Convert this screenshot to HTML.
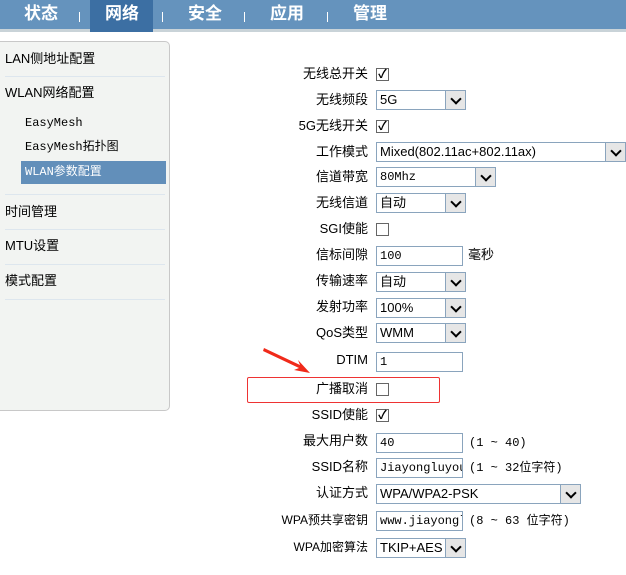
<!DOCTYPE html>
<html><head><meta charset="utf-8"><style>
*{margin:0;padding:0;box-sizing:border-box}
body{width:626px;height:575px;background:#fff;position:relative;overflow:hidden;font-family:"Liberation Sans","Noto Sans CJK SC",sans-serif;font-size:13px;color:#000}
.nav{position:absolute;left:0;top:0;width:626px;height:32px;background:#6593bd;border-bottom:3px solid #c9d3d8}
.nav span{position:absolute;top:2px;color:#fff;font-size:17px;font-weight:bold;line-height:24px}
.nav .act{position:absolute;left:90px;top:0;width:63px;height:32px;background:#3c6fa3}
.sep{position:absolute;top:12px;width:1px;height:10px;background:#fff}
.side{position:absolute;left:0;top:41px;width:170px;height:370px;background:#f2f4f2;border:1px solid #c8c8c8;border-left:none;border-radius:0 5px 5px 0}
.si{position:absolute;left:5px;font-size:13px;line-height:16px}
.hr{position:absolute;left:5px;width:160px;height:1px;background:#dde6ee}
.lab{position:absolute;right:258px;font-size:13px;text-align:right;white-space:nowrap;line-height:16px}
.ctl{position:absolute;left:376px;height:20px;border:1px solid #8aa4bd;background:#fff;font-size:13px;padding:1px 3px;white-space:nowrap;overflow:hidden;line-height:16px}
.ctl b{position:absolute;right:0;top:0;width:20px;height:18px;background:#e6e6e6;border-left:1px solid #8aa4bd;font-weight:normal}
.ctl b:after{content:"";position:absolute;left:6px;top:4px;width:6px;height:6px;border-right:2px solid #000;border-bottom:2px solid #000;transform:rotate(45deg)}
.cb{position:absolute;left:376px;width:13px;height:13px;border:1px solid #666;background:#fff;font-size:12px;line-height:11px;text-align:center;font-weight:bold}
.serif{font-family:"Liberation Mono","Noto Sans CJK SC",monospace;font-size:12px}
.note{position:absolute;font-size:12px;font-family:"Liberation Mono","Noto Sans CJK SC",monospace;line-height:16px}
</style></head><body>
<div class="nav">
<div class="act"></div>
<span style="left:24px">状态</span><div class="sep" style="left:79px"></div>
<span style="left:105px">网络</span><div class="sep" style="left:162px"></div>
<span style="left:188px">安全</span><div class="sep" style="left:244px"></div>
<span style="left:270px">应用</span><div class="sep" style="left:327px"></div>
<span style="left:353px">管理</span>
</div>
<div class="side">
<div class="si" style="top:9px">LAN侧地址配置</div>
<div class="hr" style="top:34px"></div>
<div class="si" style="top:43px">WLAN网络配置</div>
<div class="si serif" style="left:25px;top:73px">EasyMesh</div>
<div class="si serif" style="left:25px;top:97px">EasyMesh拓扑图</div>
<div style="position:absolute;left:21px;top:119px;width:145px;height:23px;background:#628fba"></div>
<div class="si serif" style="left:25px;top:122px;color:#fff">WLAN参数配置</div>
<div class="hr" style="top:152px"></div>
<div class="si" style="top:162px">时间管理</div>
<div class="hr" style="top:187px"></div>
<div class="si" style="top:196px">MTU设置</div>
<div class="hr" style="top:222px"></div>
<div class="si" style="top:231px">模式配置</div>
<div class="hr" style="top:257px"></div>
</div>

<div class="lab" style="top:66px">无线总开关</div><div class="cb" style="top:68px">✓</div>
<div class="lab" style="top:92px">无线频段</div><div class="ctl" style="top:90px;width:90px">5G<b></b></div>
<div class="lab" style="top:118px">5G无线开关</div><div class="cb" style="top:120px">✓</div>
<div class="lab" style="top:144px">工作模式</div><div class="ctl" style="top:142px;width:250px">Mixed(802.11ac+802.11ax)<b></b></div>
<div class="lab" style="top:169px">信道带宽</div><div class="ctl serif" style="top:167px;width:120px">80Mhz<b></b></div>
<div class="lab" style="top:195px">无线信道</div><div class="ctl" style="top:193px;width:90px">自动<b></b></div>
<div class="lab" style="top:221px">SGI使能</div><div class="cb" style="top:223px"></div>
<div class="lab" style="top:247px">信标间隙</div><div class="ctl serif" style="top:246px;width:87px">100</div><div style="position:absolute;left:468px;top:247px;line-height:16px">毫秒</div>
<div class="lab" style="top:273px">传输速率</div><div class="ctl" style="top:272px;width:90px">自动<b></b></div>
<div class="lab" style="top:299px">发射功率</div><div class="ctl" style="top:298px;width:90px">100%<b></b></div>
<div class="lab" style="top:325px">QoS类型</div><div class="ctl" style="top:323px;width:90px">WMM<b></b></div>
<div class="lab" style="top:352px">DTIM</div><div class="ctl serif" style="top:352px;width:87px">1</div>
<div style="position:absolute;left:247px;top:377px;width:193px;height:26px;border:1px solid #e33;border-radius:2px"></div>
<svg style="position:absolute;left:262px;top:346px" width="50" height="32"><polygon points="2,2 38,19 36,14 48,27 32,24 37,22 1,5" fill="#f02a1a"/></svg>
<div class="lab" style="top:381px">广播取消</div><div class="cb" style="top:383px"></div>
<div class="lab" style="top:407px">SSID使能</div><div class="cb" style="top:409px">✓</div>
<div class="lab" style="top:433px">最大用户数</div><div class="ctl serif" style="top:433px;width:87px">40</div><div class="note" style="left:469px;top:435px">(1 ~ 40)</div>
<div class="lab" style="top:459px">SSID名称</div><div class="ctl serif" style="top:458px;width:87px">Jiayongluyou.com</div><div class="note" style="left:469px;top:460px">(1 ~ 32位字符)</div>
<div class="lab" style="top:485px">认证方式</div><div class="ctl" style="top:484px;width:205px">WPA/WPA2-PSK<b></b></div>
<div class="lab" style="top:512px;font-size:12px">WPA预共享密钥</div><div class="ctl serif" style="top:511px;width:87px">www.jiayongluyou</div><div class="note" style="left:469px;top:513px">(8 ~ 63 位字符)</div>
<div class="lab" style="top:539px;font-size:12px">WPA加密算法</div><div class="ctl" style="top:538px;width:90px">TKIP+AES<b></b></div>
</body></html>
